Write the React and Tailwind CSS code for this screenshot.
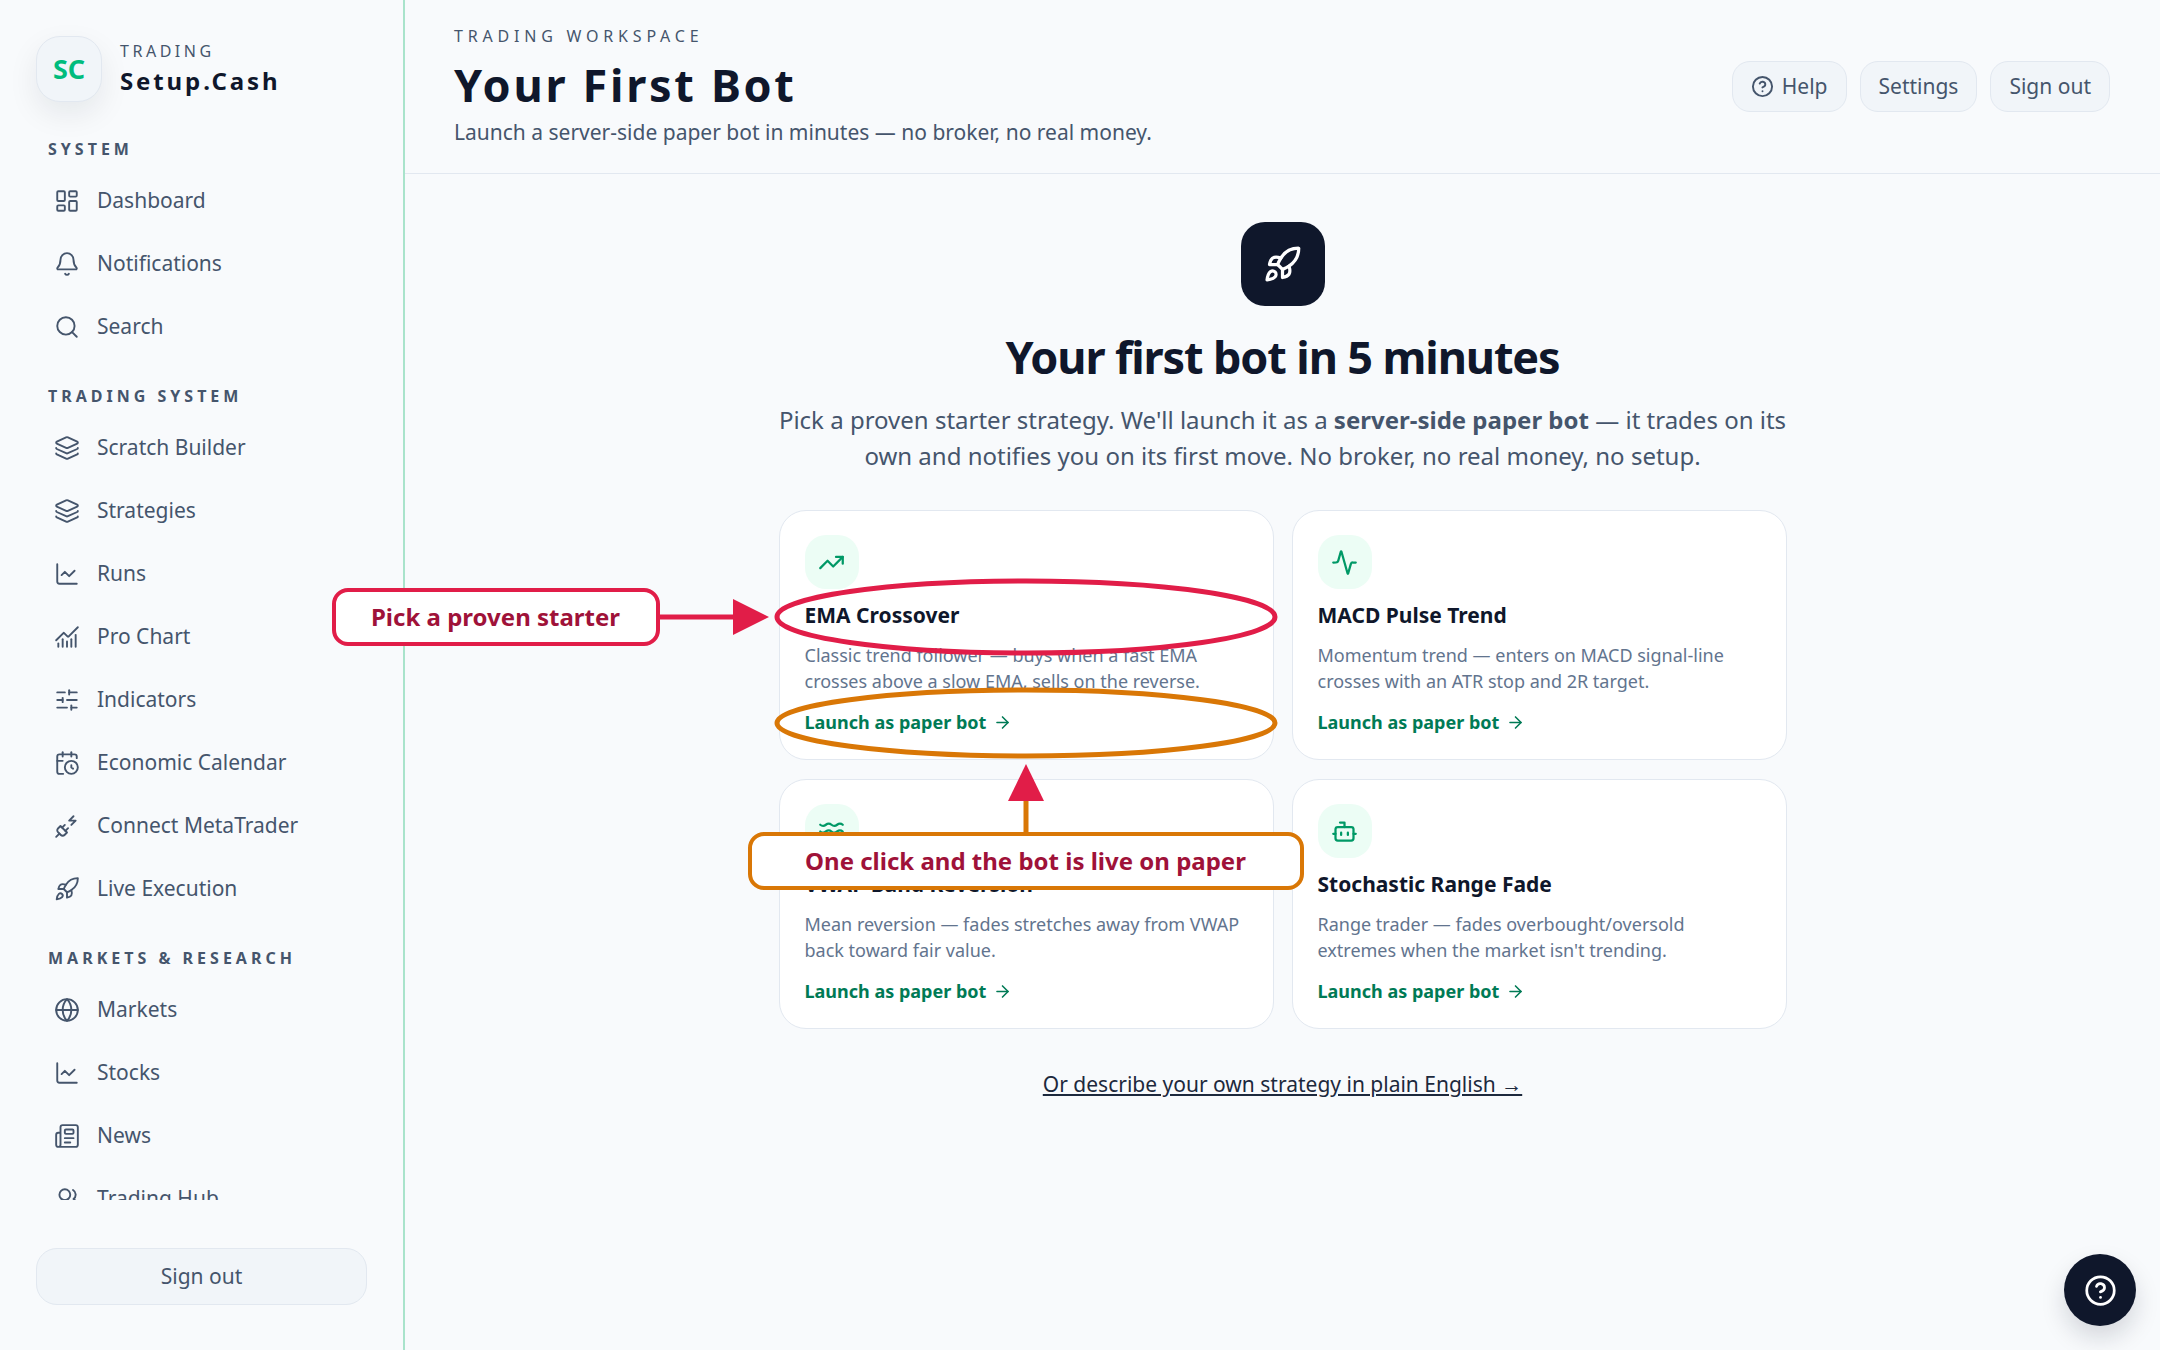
import React from "react";
import {
  Activity,
  ArrowRight,
  Bell,
  Bot,
  CalendarClock,
  ChartLine,
  ChartNoAxesCombined,
  CircleHelp,
  Globe,
  Layers,
  LayoutDashboard,
  Newspaper,
  PlugZap,
  Rocket,
  Search,
  SlidersHorizontal,
  TrendingUp,
  UsersRound,
  Waves,
} from "lucide-react";

const sections = [
  {
    label: "System",
    items: [
      { icon: LayoutDashboard, text: "Dashboard" },
      { icon: Bell, text: "Notifications" },
      { icon: Search, text: "Search" },
    ],
  },
  {
    label: "Trading System",
    items: [
      { icon: Layers, text: "Scratch Builder" },
      { icon: Layers, text: "Strategies" },
      { icon: ChartLine, text: "Runs" },
      { icon: ChartNoAxesCombined, text: "Pro Chart" },
      { icon: SlidersHorizontal, text: "Indicators" },
      { icon: CalendarClock, text: "Economic Calendar" },
      { icon: PlugZap, text: "Connect MetaTrader" },
      { icon: Rocket, text: "Live Execution" },
    ],
  },
  {
    label: "Markets & Research",
    items: [
      { icon: Globe, text: "Markets" },
      { icon: ChartLine, text: "Stocks" },
      { icon: Newspaper, text: "News" },
      { icon: UsersRound, text: "Trading Hub" },
    ],
  },
];

const bots = [
  {
    icon: TrendingUp,
    title: "EMA Crossover",
    text: "Classic trend follower — buys when a fast EMA crosses above a slow EMA, sells on the reverse.",
    annotated: true,
  },
  {
    icon: Activity,
    title: "MACD Pulse Trend",
    text: "Momentum trend — enters on MACD signal-line crosses with an ATR stop and 2R target.",
  },
  {
    icon: Waves,
    title: "VWAP Band Reversion",
    text: "Mean reversion — fades stretches away from VWAP back toward fair value.",
  },
  {
    icon: Bot,
    title: "Stochastic Range Fade",
    text: "Range trader — fades overbought/oversold extremes when the market isn't trending.",
  },
];

function Sidebar() {
  return (
    <aside className="flex w-[405px] shrink-0 flex-col border-r-2 border-[#a9e3cb] px-9 pt-9 pb-[45px]">
      <div className="flex items-center gap-[18px]">
        <div className="flex size-[66px] items-center justify-center rounded-3xl border border-slate-200 bg-slate-100 text-[27px] font-bold text-emerald-500 shadow-[0_12px_30px_rgba(15,23,42,0.08)]">
          SC
        </div>
        <div>
          <div className="text-base leading-6 tracking-[0.22em] text-slate-600 uppercase">Trading</div>
          <div className="text-2xl leading-9 font-bold tracking-[0.12em] text-slate-900">Setup.Cash</div>
        </div>
      </div>
      <nav className="mt-[35px] mb-12 flex min-h-0 flex-1 flex-col gap-[29px] overflow-hidden">
        {sections.map((section) => (
          <section key={section.label} className="shrink-0">
            <h2 className="px-3 text-base leading-6 font-bold tracking-[0.25em] text-slate-600 uppercase">
              {section.label}
            </h2>
            <ul className="mt-[11px] flex flex-col gap-[6px]">
              {section.items.map(({ icon: Icon, text }) => (
                <li key={text}>
                  <a href="#" className="flex h-[57px] items-center gap-[17px] rounded-2xl px-[18px] text-[21px] text-slate-600">
                    <Icon size={26} strokeWidth={1.75} className="shrink-0" />
                    {text}
                  </a>
                </li>
              ))}
            </ul>
          </section>
        ))}
      </nav>
      <button className="h-[57px] shrink-0 rounded-[21px] border border-slate-200 bg-slate-100 text-[21px] text-slate-600">
        Sign out
      </button>
    </aside>
  );
}

function HeaderButton({ children }) {
  return (
    <button className="flex h-[51px] items-center gap-2 rounded-[18px] border border-slate-200 bg-slate-100 px-[18px] text-[21px] text-slate-600">
      {children}
    </button>
  );
}

function Header() {
  return (
    <header className="flex items-center justify-between border-b border-slate-200 pt-[25px] pr-[50px] pb-[25px] pl-[49px]">
      <div>
        <p className="text-base leading-[22px] tracking-[0.3em] text-slate-600 uppercase">Trading Workspace</p>
        <h1 className="mt-[10px] text-[45px] leading-[56px] font-bold tracking-[0.06em] text-slate-900">
          Your First Bot
        </h1>
        <p className="mt-[3px] text-[21px] leading-8 text-slate-600">
          Launch a server-side paper bot in minutes — no broker, no real money.
        </p>
      </div>
      <div className="flex gap-[13px]">
        <HeaderButton>
          <CircleHelp size={23} strokeWidth={2} />
          Help
        </HeaderButton>
        <HeaderButton>Settings</HeaderButton>
        <HeaderButton>Sign out</HeaderButton>
      </div>
    </header>
  );
}

function Annotations() {
  return (
    <div className="pointer-events-none absolute inset-0 z-10">
      <svg className="absolute -left-[120px] top-0 h-[330px] w-[640px]" viewBox="0 0 640 330" fill="none">
        <ellipse cx="366" cy="106" rx="249" ry="36" stroke="#e11d48" strokeWidth="5" />
        <ellipse cx="366" cy="212" rx="249" ry="33" stroke="#d97706" strokeWidth="5" />
        <path d="M-2 106H74" stroke="#e11d48" strokeWidth="5" />
        <path d="M73 88L109 106L73 124Z" fill="#e11d48" />
        <path d="M366 325V290" stroke="#d97706" strokeWidth="5" />
        <path d="M348 290L366 253L384 290Z" fill="#e11d48" />
      </svg>
      <div className="absolute right-full top-[77px] mr-[120px] flex h-[58px] w-[328px] items-center justify-center rounded-2xl border-4 border-[#e11d48] bg-white text-2xl font-bold text-[#9f1239]">
        Pick a proven starter
      </div>
      <div className="absolute top-[321px] -left-[32px] flex h-[58px] w-[556px] items-center justify-center rounded-2xl border-4 border-[#d97706] bg-white text-2xl font-bold text-[#9f1239]">
        One click and the bot is live on paper
      </div>
    </div>
  );
}

function BotCard({ icon: Icon, title, text, annotated }) {
  return (
    <article className="relative rounded-[27px] border border-slate-200 bg-white px-[25px] py-6">
      <div className="flex size-[54px] items-center justify-center rounded-[21px] bg-emerald-50 text-emerald-600">
        <Icon size={27} />
      </div>
      <h3 className="mt-[11px] text-[21px] leading-[30px] font-bold text-slate-900">{title}</h3>
      <p className="mt-3 text-lg leading-[26px] text-slate-500">{text}</p>
      <button className="mt-[15px] flex items-center gap-[7px] text-lg leading-[26px] font-bold text-emerald-700">
        Launch as paper bot
        <ArrowRight size={19} />
      </button>
      {annotated && <Annotations />}
    </article>
  );
}

export default function App() {
  return (
    <div className="flex h-screen bg-slate-50 font-['Noto_Sans',sans-serif]">
      <Sidebar />
      <div className="flex min-w-0 flex-1 flex-col">
        <Header />
        <main className="mx-auto flex w-full max-w-[1008px] flex-col items-center pt-12">
          <div className="flex size-[84px] items-center justify-center rounded-3xl bg-slate-900 text-white">
            <Rocket size={39} />
          </div>
          <h2 className="mt-6 text-[45px] leading-[54px] font-bold tracking-tight text-slate-900">
            Your first bot in 5 minutes
          </h2>
          <p className="mt-[18px] text-center text-2xl leading-9 text-slate-600">
            Pick a proven starter strategy. We'll launch it as a{" "}
            <strong className="font-bold">server-side paper bot</strong> — it trades on its own and notifies you on its
            first move. No broker, no real money, no setup.
          </p>
          <div className="mt-9 grid w-full grid-cols-2 gap-x-[18px] gap-y-[19px]">
            {bots.map((bot) => (
              <BotCard key={bot.title} {...bot} />
            ))}
          </div>
          <a href="#" className="mt-10 text-[21px] leading-[30px] text-slate-800 underline">
            Or describe your own strategy in plain English →
          </a>
        </main>
      </div>
      <button
        aria-label="Open help"
        className="fixed right-6 bottom-6 flex size-[72px] items-center justify-center rounded-full bg-slate-900 text-white shadow-[0_12px_24px_rgba(15,23,42,0.15)]"
      >
        <CircleHelp size={33} />
      </button>
    </div>
  );
}
